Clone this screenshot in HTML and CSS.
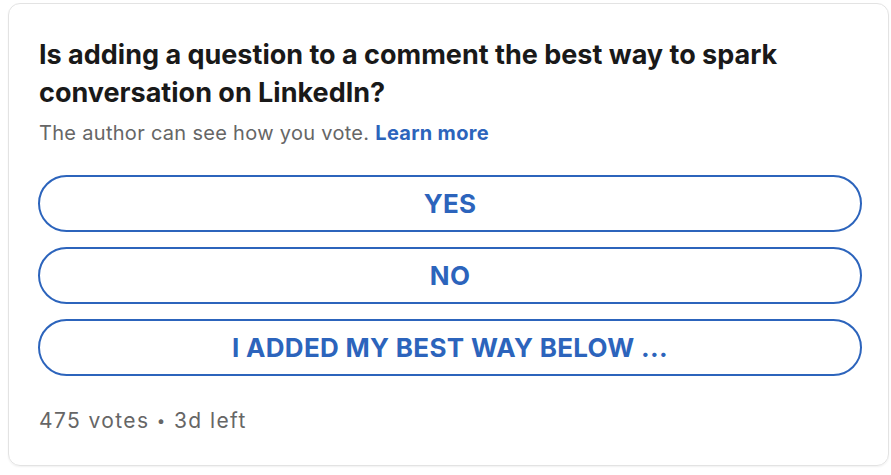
FILE: index.html
```html
<!DOCTYPE html>
<html lang="en">
<head>
<meta charset="utf-8">
<title>Poll</title>
<link rel="stylesheet" href="styles.css">
</head>
<body>
<div class="card">
  <h2 class="question">Is adding a question to a comment the best way to spark conversation on LinkedIn?</h2>
  <p class="note">The author can see how you vote. <a class="learn" href="#">Learn more</a></p>
  <div class="options">
    <button class="option">YES</button>
    <button class="option">NO</button>
    <button class="option">I ADDED MY BEST WAY BELOW ...</button>
  </div>
  <p class="meta">475 votes <span class="dot">•</span> 3d left</p>
</div>
</body>
</html>
```
FILE: styles.css
```css
html, body {
  margin: 0;
  padding: 0;
  background: #ffffff;
}
body {
  font-family: Inter, "Noto Sans", "Liberation Sans", sans-serif;
  padding: 3px 2px 9px 8px;
}
.card {
  box-sizing: border-box;
  height: 463px;
  border: 1px solid #e3e3e3;
  border-radius: 12px;
  box-shadow: 0 1px 2px rgba(0,0,0,0.06);
  padding: 32px 26px 0 29px;
  display: flex;
  flex-direction: column;
}
.question {
  margin: 0 0 0 1px;
  font-size: 27px;
  line-height: 38px;
  font-weight: 700;
  color: #191919;
  letter-spacing: 0;
}
.note {
  margin: 8px 0 0 1px;
  font-size: 20px;
  line-height: 26px;
  color: #666666;
  letter-spacing: 0.3px;
}
.learn {
  color: #2c64bc;
  font-weight: 700;
  text-decoration: none;
}
.options {
  display: flex;
  flex-direction: column;
  gap: 15px;
  margin-top: 29px;
}
.option {
  height: 57px;
  border: 2px solid #2c64bc;
  border-radius: 29px;
  background: #ffffff;
  color: #2c64bc;
  font-family: Inter, "Noto Sans", "Liberation Sans", sans-serif;
  font-size: 26px;
  font-weight: 700;
  letter-spacing: 0.3px;
  padding: 0;
}
.meta {
  margin: 31px 0 0 1px;
  font-size: 21px;
  line-height: 28px;
  color: #666666;
  letter-spacing: 1.4px;
}
.dot {
  font-size: 15px;
  vertical-align: 2px;
}
```
